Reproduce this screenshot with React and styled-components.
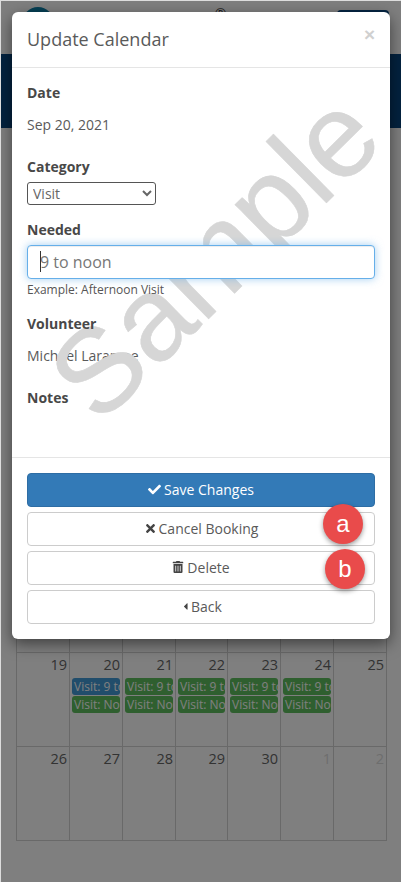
import React from "react";
import styled, { createGlobalStyle } from "styled-components";
import { FaCheck, FaTimes, FaTrashAlt, FaCaretLeft } from "react-icons/fa";

const Global = createGlobalStyle`
  * { box-sizing: border-box; }
  html, body { margin: 0; padding: 0; background: #fff; }
  body { font-family: "Open Sans", "Liberation Sans", sans-serif; font-size: 14px; color: #555; }
`;

const Page = styled.div`
  position: relative;
  width: 401px;
  height: 882px;
  overflow: hidden;
  background: #fff;
  border-top: 1px solid #ddd;
  border-left: 1px solid #ddd;
`;

const TopBar = styled.header`
  height: 53px;
  display: flex;
  justify-content: space-between;
  padding: 6px 12px 0 21px;
`;

const Logo = styled.div`
  width: 32px;
  height: 32px;
  border-radius: 50%;
  background: #0b7fa8;
`;

const Registered = styled.span`
  margin: 0 0 0 50px;
  font-size: 14px;
  line-height: 14px;
  color: #444;
`;

const MenuButton = styled.div`
  width: 52px;
  height: 30px;
  margin-top: 3px;
  border-radius: 4px;
  background: #0a4a86;
`;

const Band = styled.div`
  height: 74px;
  background: #06457e;
`;

const Calendar = styled.div`
  margin: 430px 0 0 15px;
`;

const Week = styled.div`
  display: grid;
  grid-template-columns: 53px 53px 53px 52px 53px 53px 54px;
  height: ${(p) => (p.$last ? 95 : 94)}px;
`;

const Day = styled.div`
  border-top: 1px solid #d2d2d2;
  border-left: 1px solid #d2d2d2;
  border-bottom: ${(p) => (p.$last ? "1px solid #d2d2d2" : "0")};
  border-right: ${(p) => (p.$end ? "1px solid #d2d2d2" : "0")};
  padding: 2px 2px 0 2px;
  min-width: 0;
`;

const DayNumber = styled.div`
  text-align: right;
  font-size: 14.5px;
  line-height: 20px;
  height: 23px;
  color: ${(p) => (p.$muted ? "#dcdcdc" : "#666")};
`;

const Event = styled.div`
  height: 17px;
  margin: 0 0 1px 0;
  padding: 0 2px;
  border-radius: 3px;
  overflow: hidden;
  white-space: nowrap;
  font-size: 12px;
  line-height: 17px;
  color: #fff;
  background: ${(p) => (p.$blue ? "#429ad6" : "#5fbe5f")};
`;

const Backdrop = styled.div`
  position: absolute;
  inset: 0;
  background: rgba(0, 0, 0, 0.5);
`;

const Modal = styled.div`
  position: absolute;
  left: 11px;
  top: 11px;
  width: 378px;
  height: 627px;
  background: #fff;
  border-radius: 6px;
  box-shadow: 0 5px 15px rgba(0, 0, 0, 0.5);
  overflow: hidden;
`;

const ModalHeader = styled.div`
  height: 56px;
  display: flex;
  justify-content: space-between;
  align-items: flex-start;
  padding: 14px 15px 0 15px;
  border-bottom: 1px solid #e5e5e5;
`;

const Title = styled.h4`
  margin: 0;
  font-size: 18px;
  font-weight: 400;
  line-height: 26px;
  color: #5a5a5a;
`;

const Close = styled.span`
  font-family: "Liberation Sans", sans-serif;
  font-size: 19px;
  font-weight: 700;
  line-height: 18px;
  color: #d0d0d0;
`;

const ModalBody = styled.div`
  padding: 15px 15px 49px 15px;
`;

const Field = styled.div`
  margin-bottom: ${(p) => p.$gap ?? 22}px;
`;

const Label = styled.label`
  position: relative;
  z-index: 2;
  display: block;
  font-weight: 700;
  line-height: 20px;
  color: #484848;
  margin-bottom: ${(p) => p.$below ?? 5}px;
`;

const StaticValue = styled.div`
  margin-top: 12px;
  line-height: 20px;
  color: #5a5a5a;
`;

const Select = styled.select`
  display: block;
  width: 129px;
  height: 23px;
  padding: 0 0 0 1px;
  font-family: inherit;
  font-size: 14px;
  color: #666;
  background: #fff;
  border: 1px solid #555;
  border-radius: 3px;
`;

const InputWrap = styled.div`
  position: relative;
  z-index: 2;
`;

const Input = styled.input`
  display: block;
  width: 100%;
  height: 34px;
  padding: 0 12px;
  font-family: inherit;
  font-size: 16px;
  color: #777;
  background: #fff;
  border: 1px solid #66afe9;
  border-radius: 4px;
  outline: 0;
  box-shadow: inset 0 1px 1px rgba(0, 0, 0, 0.075), 0 0 8px rgba(102, 175, 233, 0.6);
`;

const Caret = styled.span`
  position: absolute;
  left: 13px;
  top: 6px;
  width: 1px;
  height: 21px;
  background: #333;
`;

const Help = styled.div`
  position: relative;
  z-index: 2;
  margin-top: 2px;
  font-size: 12px;
  line-height: 17px;
  color: #555;
`;

const Footer = styled.div`
  position: relative;
  display: flex;
  flex-direction: column;
  gap: 5px;
  padding: 15px;
  border-top: 1px solid #e5e5e5;
`;

const Button = styled.button`
  display: flex;
  align-items: center;
  justify-content: center;
  gap: ${(p) => p.$gap ?? 3}px;
  width: 100%;
  height: 34px;
  padding: 0 0 2px;
  font-family: inherit;
  font-size: 14px;
  color: ${(p) => (p.$primary ? "#fff" : "#5a5a5a")};
  background: ${(p) => (p.$primary ? "#337ab7" : "#fff")};
  border: 1px solid ${(p) => (p.$primary ? "#2e6da4" : "#ccc")};
  border-radius: 4px;
  svg { font-size: ${(p) => p.$icon ?? 12}px; color: ${(p) => (p.$primary ? "#fff" : "#444")}; }
`;

const Badge = styled.span`
  position: absolute;
  right: ${(p) => p.$right}px;
  top: ${(p) => p.$top}px;
  width: 40px;
  height: 40px;
  border-radius: 50%;
  display: flex;
  align-items: center;
  justify-content: center;
  font-family: "Liberation Sans", sans-serif;
  font-size: 24px;
  line-height: 1;
  color: #fff;
  background: #e94b4b;
  box-shadow: 0 2px 5px rgba(0, 0, 0, 0.4);
`;

const Watermark = styled.span`
  position: absolute;
  z-index: 1;
  left: 0;
  top: 184px;
  font-family: "Liberation Sans", sans-serif;
  font-size: 119px;
  line-height: 1;
  color: #d6d6d6;
  -webkit-text-stroke: 0.6px #d6d6d6;
  transform: rotate(-44.5deg);
  transform-origin: center;
  white-space: nowrap;
  pointer-events: none;
`;

const weeks = [
  { days: ["", "", "", "", "", "", ""] },
  { days: ["19", "20", "21", "22", "23", "24", "25"], events: true },
  { days: ["26", "27", "28", "29", "30", "1", "2"], last: true },
];

export default function App() {
  return (
    <>
      <Global />
      <Page>
        <TopBar>
          <Logo />
          <Registered>®</Registered>
          <MenuButton />
        </TopBar>
        <Band />
        <Calendar>
          {weeks.map((w, i) => (
            <Week key={i} $last={w.last}>
              {w.days.map((d, j) => (
                <Day key={j} $last={w.last} $end={j === 6}>
                  <DayNumber $muted={w.last && j >= 5}>{d}</DayNumber>
                  {w.events && j >= 1 && j <= 5 && (
                    <>
                      <Event $blue={j === 1}>Visit: 9 to noon</Event>
                      <Event>Visit: Noon to 3</Event>
                    </>
                  )}
                </Day>
              ))}
            </Week>
          ))}
        </Calendar>
        <Backdrop />
        <Modal>
          <ModalHeader>
            <Title>Update Calendar</Title>
            <Close>×</Close>
          </ModalHeader>
          <ModalBody>
            <Field>
              <Label>Date</Label>
              <StaticValue>Sep 20, 2021</StaticValue>
            </Field>
            <Field $gap={15}>
              <Label>Category</Label>
              <Select defaultValue="Visit">
                <option>Visit</option>
              </Select>
            </Field>
            <Field $gap={16}>
              <Label>Needed</Label>
              <InputWrap>
                <Input readOnly value="9 to noon" />
                <Caret />
              </InputWrap>
              <Help>Example: Afternoon Visit</Help>
            </Field>
            <Field>
              <Label>Volunteer</Label>
              <StaticValue>Michael Laramee</StaticValue>
            </Field>
            <Field $gap={0}>
              <Label $below={0}>Notes</Label>
            </Field>
          </ModalBody>
          <Footer>
            <Button $primary $icon={13}><FaCheck /> Save Changes</Button>
            <Button $icon={13} $gap={2}><FaTimes /> Cancel Booking</Button>
            <Button $icon={12}><FaTrashAlt /> Delete</Button>
            <Button $icon={11} $gap={0}><FaCaretLeft /> Back</Button>
            <Badge $right={27} $top={46}>a</Badge>
            <Badge $right={25} $top={91}>b</Badge>
          </Footer>
          <Watermark>Sample</Watermark>
        </Modal>
      </Page>
    </>
  );
}
